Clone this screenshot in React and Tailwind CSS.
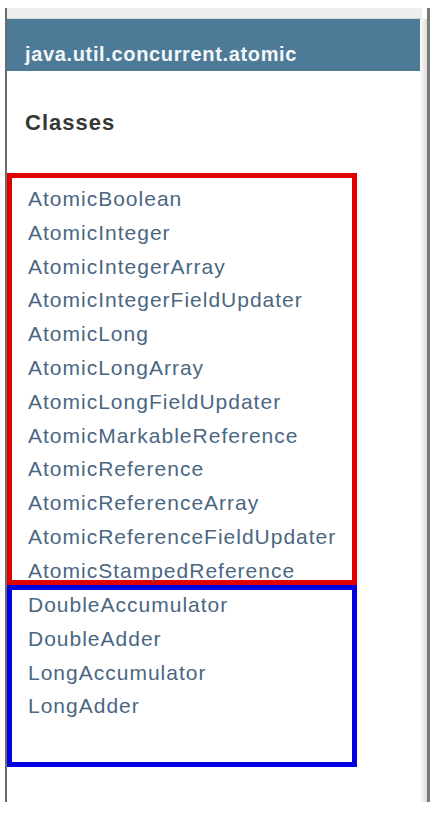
import React from "react";

const red = [
  "AtomicBoolean",
  "AtomicInteger",
  "AtomicIntegerArray",
  "AtomicIntegerFieldUpdater",
  "AtomicLong",
  "AtomicLongArray",
  "AtomicLongFieldUpdater",
  "AtomicMarkableReference",
  "AtomicReference",
  "AtomicReferenceArray",
  "AtomicReferenceFieldUpdater",
  "AtomicStampedReference",
];
const blue = ["DoubleAccumulator", "DoubleAdder", "LongAccumulator", "LongAdder"];

function Item({ name }) {
  return (
    <div className="text-[21px] leading-[33.8px] tracking-[1px] text-[#4A6782] whitespace-nowrap">
      {name}
    </div>
  );
}

export default function App() {
  return (
    <div
      className="w-[444px] h-[813px] bg-white overflow-hidden"
      style={{ fontFamily: '"Liberation Sans", Arial, sans-serif' }}
    >
      <div className="ml-[5px] mt-[8px] w-[425px] h-[794px] border-l-2 border-r-[3px] border-l-[#6b6b6b] border-r-[#7a7a7a] flex flex-col">
        <div className="h-[11px] bg-[#efefef] border-b border-[#d6d6d6] mr-[5px]" />
        <div className="flex flex-1">
          <div className="w-[413px] flex flex-col">
            <div className="h-[52px] bg-[#4D7A97] pl-[18px] pt-[24px]">
              <div className="text-[20px] leading-[22px] font-bold tracking-[0.65px] text-[#f4f7fa] whitespace-nowrap">
                java.util.concurrent.atomic
              </div>
            </div>
            <div className="mt-[39px] pl-[18px] text-[22px] leading-[26px] font-bold tracking-[1px] text-[#353833]">
              Classes
            </div>
            <div className="mt-[37px] w-[350px] h-[412px] border-[5px] border-[#e00000] pl-[16px] pt-[4px]">
              {red.map((n) => (
                <Item key={n} name={n} />
              ))}
            </div>
            <div className="w-[350px] h-[182px] border-[5px] border-[#0000e0] pl-[16px]">
              <div className="-mt-[2px]">
                {blue.map((n) => (
                  <Item key={n} name={n} />
                ))}
              </div>
            </div>
          </div>
          <div className="w-[7px] bg-gradient-to-r from-white to-[#dcdcdc]" />
        </div>
      </div>
    </div>
  );
}
